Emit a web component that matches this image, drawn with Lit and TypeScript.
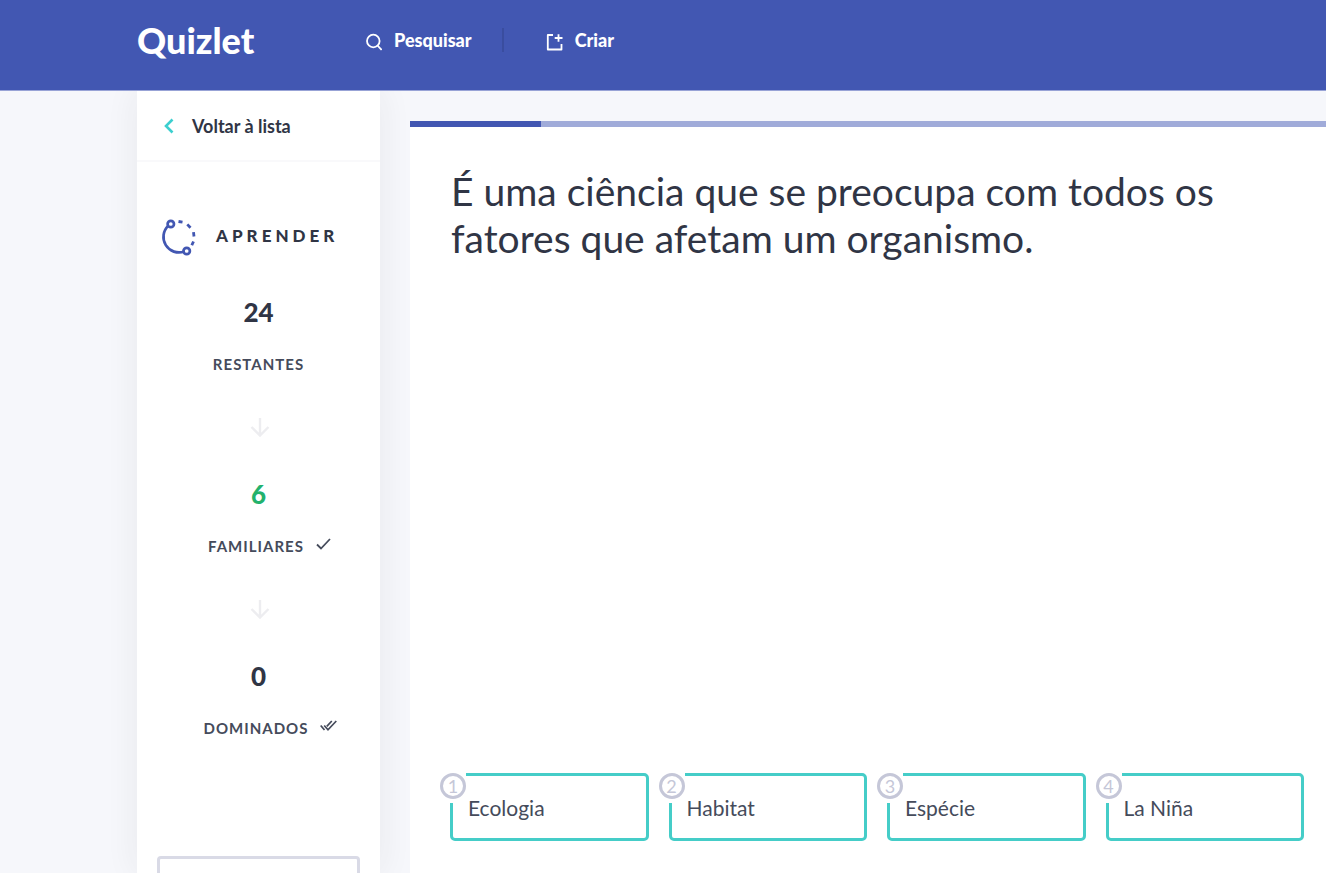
import { LitElement, html, css } from "lit";
import { customElement, state } from "lit/decorators.js";

const OPTIONS = ["Ecologia", "Habitat", "Espécie", "La Niña"];

const arrow = html`<svg class="arrow" width="20" height="20" viewBox="0 0 20 20" aria-hidden="true">
  <path d="M10 1V18.500M1.500 10L10 18.500L18.500 10" />
</svg>`;

@customElement("app-root")
export class AppRoot extends LitElement {
  static styles = css`
    :host {
      display: flex;
      flex-direction: column;
      min-height: 100vh;
      box-sizing: border-box;
      background: #f6f7fb;
      color: #303545;
      font-family: Lato, "Open Sans", sans-serif;
    }
    * {
      box-sizing: border-box;
    }
    p,
    h1,
    h2 {
      margin: 0;
    }
    svg {
      fill: none;
      stroke: currentColor;
      flex: none;
    }
    button {
      font: inherit;
      color: inherit;
      cursor: pointer;
    }
    .header {
      display: flex;
      align-items: center;
      height: 91px;
      padding: 0 137px 10px;
      background: #4257b2;
      border-bottom: 1px solid #98a3d6;
      color: #fff;
      position: relative;
      z-index: 1;
    }
    .logo {
      width: 229px;
      color: inherit;
      text-decoration: none;
      font-size: 36px;
      line-height: 44px;
      font-weight: 900;
    }
    .nav {
      display: flex;
      align-items: center;
    }
    .nav button {
      display: flex;
      align-items: center;
      gap: 12px;
      padding: 0;
      border: 0;
      background: none;
      font-size: 18px;
      line-height: 24px;
      font-weight: 900;
    }
    .nav svg {
      margin-top: 4px;
    }
    .divider {
      width: 2px;
      height: 24px;
      margin: 0 42px 0 30px;
      background: #3a4d9f;
    }
    .body {
      flex: 1;
      display: flex;
      gap: 30px;
      padding-left: 137px;
    }
    .side {
      width: 243px;
      height: calc(100vh - 91px);
      overflow: hidden;
      flex: none;
      display: flex;
      flex-direction: column;
      background: #fff;
    }
    .side-shadow {
      display: flex;
      box-shadow: 0 0 32px rgba(48, 48, 48, 0.07);
    }
    .back {
      display: flex;
      align-items: center;
      gap: 18px;
      height: 71px;
      flex: none;
      padding-left: 27px;
      border-bottom: 2px solid #f9f9fb;
      color: inherit;
      text-decoration: none;
      font-size: 18px;
      font-weight: 700;
    }
    .back svg {
      color: #3ccfcf;
    }
    .mode {
      display: flex;
      align-items: center;
      gap: 19px;
      padding: 55px 0 0 23px;
    }
    .mode svg {
      color: #4257b2;
    }
    .mode h1 {
      padding-bottom: 2px;
      font-size: 17px;
      line-height: 24px;
      font-weight: 900;
      letter-spacing: 4px;
    }
    .stats {
      display: flex;
      flex-direction: column;
      align-items: center;
      padding-top: 39px;
    }
    .count {
      font-size: 26px;
      line-height: 32px;
      font-weight: 900;
    }
    .known {
      color: #23b26d;
    }
    .label {
      display: grid;
      grid-template-columns: 1fr auto 1fr;
      align-items: center;
      width: 100%;
      margin-top: 26px;
      font-size: 15px;
      line-height: 20px;
      font-weight: 700;
      letter-spacing: 1px;
      color: #454b5b;
    }
    .marked {
      padding-right: 5px;
    }
    .label span {
      grid-column: 2;
    }
    .label svg {
      margin: 0 0 4px 12px;
    }
    .arrow {
      margin: 43px 0 41px 2px;
      color: #ededf0;
      stroke-width: 2.4;
    }
    .options {
      height: 52px;
      flex: none;
      margin: 118px 20px 20px;
      background: #fff;
      border: 3px solid #d9dae6;
      border-radius: 4px;
      font-size: 16px;
      font-weight: 700;
    }
    .main {
      flex: 1;
      min-width: 0;
      display: flex;
      flex-direction: column;
      margin-top: 30px;
      background: #fff;
    }
    .progress {
      height: 6px;
      background: #a0abd9;
    }
    .bar {
      height: 100%;
      background: #4257b2;
    }
    .question {
      padding: 41px 23px 32px 41px;
      font-size: 39px;
      line-height: 47px;
      font-weight: 400;
      max-width: 860px;
    }
    .answers {
      display: grid;
      grid-template-columns: repeat(4, 1fr);
      gap: 20px;
      margin-top: auto;
      padding: 0 22px 32px 40px;
    }
    .answer {
      position: relative;
      height: 68px;
      padding: 2px 15px 0;
      border: 3px solid #45cdc8;
      border-radius: 5px;
      background: #fff;
      text-align: left;
      font-size: 21px;
      line-height: 26px;
      color: #454b5b;
    }
    .badge {
      position: absolute;
      left: -13px;
      top: -3px;
      padding-bottom: 4px;
      background: #fff;
    }
    .number {
      display: flex;
      align-items: center;
      justify-content: center;
      width: 26px;
      height: 26px;
      border: 3px solid #c5c7d8;
      border-radius: 50%;
      font-size: 18px;
      line-height: 20px;
      font-weight: 400;
      color: #c5c7d8;
    }
  `;

  @state() private progress = 14.3;

  private stat(count: number, label: string, icon: unknown = null, known = false) {
    return html`
      <p class="count ${known ? "known" : ""}">${count}</p>
      <p class="label ${icon ? "marked" : ""}"><span>${label}</span>${icon}</p>
    `;
  }

  render() {
    return html`
      <header class="header">
        <a class="logo" href="#">Quizlet</a>
        <nav class="nav">
          <button type="button">
            <svg width="16" height="18" viewBox="0 0 16 18" stroke-width="1.8" aria-hidden="true">
              <circle cx="7.300" cy="8" r="6.300" />
              <path d="M11.500 12.500L15.600 17" />
            </svg>
            Pesquisar
          </button>
          <span class="divider"></span>
          <button type="button">
            <svg width="17" height="18" viewBox="0 0 17 18" stroke-width="1.8" aria-hidden="true">
              <path d="M7 2H1.800V16.500H15.500V11M12.500 1.200V8.800M8.700 5H16.500" stroke-linejoin="round" />
            </svg>
            Criar
          </button>
        </nav>
      </header>
      <div class="body">
        <div class="side-shadow">
          <aside class="side">
            <a class="back" href="#">
              <svg width="10" height="16" viewBox="0 0 10 16" stroke-width="2.600" aria-hidden="true">
                <path d="M8.500 1.500L2 8L8.500 14.500" />
              </svg>
              Voltar à lista
            </a>
            <div class="mode">
              <svg width="37" height="40" viewBox="0 0 37 40" stroke-width="2.700" aria-hidden="true">
                <path d="M8.300 8.700A15.500 15.500 0 0 0 24.300 34.500" />
                <path d="M18.500 4.500L22.500 5.200M27.300 7.400L30.500 10.700M33.500 15.200L34 19.500M33.500 24.500L31.800 28.300" stroke-width="2.800" />
                <circle cx="10.800" cy="7" r="3.200" />
                <circle cx="26.700" cy="34" r="3.200" />
              </svg>
              <h1>APRENDER</h1>
            </div>
            <div class="stats">
              ${this.stat(24, "RESTANTES")} ${arrow}
              ${this.stat(
                6,
                "FAMILIARES",
                html`<svg width="15" height="12" viewBox="0 0 15 12" stroke-width="1.800" aria-hidden="true">
                  <path d="M1 6.500L5 10.500L14 1" />
                </svg>`,
                true
              )}
              ${arrow}
              ${this.stat(
                0,
                "DOMINADOS",
                html`<svg width="17" height="12" viewBox="0 0 17 12" stroke-width="1.700" aria-hidden="true">
                  <path d="M.7 5.500L4.500 10M4.200 5.500L8 9.800L16.300 1M6.800 6.300L11.800 1" />
                </svg>`
              )}
            </div>
            <button class="options" type="button" aria-label="Opções"></button>
          </aside>
        </div>
        <main class="main">
          <div class="progress"><div class="bar" style="width:${this.progress}%"></div></div>
          <h2 class="question">É uma ciência que se preocupa com todos os fatores que afetam um organismo.</h2>
          <div class="answers">
            ${OPTIONS.map(
              (text, i) => html`<button class="answer" type="button">
                <span class="badge"><span class="number">${i + 1}</span></span>${text}
              </button>`
            )}
          </div>
        </main>
      </div>
    `;
  }
}
